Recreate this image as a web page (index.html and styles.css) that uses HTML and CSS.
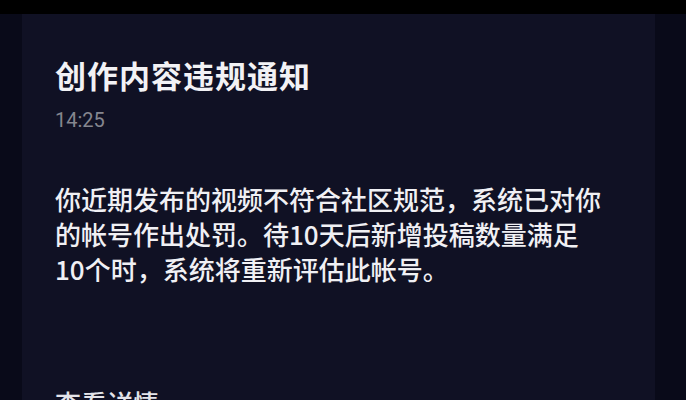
FILE: index.html
```html
<!DOCTYPE html>
<html lang="zh">
<head>
<meta charset="utf-8">
<link rel="stylesheet" href="styles.css">
</head>
<body>
<div class="topbar"></div>
<div class="page">
  <div class="card">
    <h1 class="title">创作内容违规通知</h1>
    <div class="time">14:25</div>
    <p class="body">你近期发布的视频不符合社区规范，系统已对你<br>的帐号作出处罚。待10天后新增投稿数量满足<br>10个时，系统将重新评估此帐号。</p>
    <div class="divider"></div>
    <div class="footer">
      <span class="more">查看详情</span>
      <span class="arrow">›</span>
    </div>
  </div>
</div>
</body>
</html>
```

FILE: styles.css
```css
html, body {
  margin: 0;
  padding: 0;
  height: 100%;
  overflow: hidden;
  background: #090a19;
  font-family: "Noto Sans CJK SC", "Noto Sans", sans-serif;
}
.topbar {
  height: 14px;
  background: #000;
}
.page {
  display: flex;
  padding: 0 31px 0 22px;
  height: 386px;
}
.card {
  flex: 1;
  background: #101124;
  padding: 40px 30px 0 33px;
  display: flex;
  flex-direction: column;
}
.title {
  margin: 0;
  font-size: 31px;
  font-weight: 700;
  line-height: 42px;
  letter-spacing: 1px;
  color: #f2f2f5;
}
.time {
  margin-top: 12px;
  font-family: "Roboto", "Noto Sans", sans-serif;
  font-size: 20px;
  line-height: 24px;
  color: #85868f;
}
.body {
  margin: 49px 0 0 0;
  white-space: nowrap;
  font-size: 26px;
  font-weight: 500;
  line-height: 35px;
  color: #f0f0f4;
}
.divider {
  margin-top: 76px;
  margin-left: 5px;
  height: 1px;
  background: #1b1c30;
}
.footer {
  display: flex;
  justify-content: space-between;
  align-items: flex-start;
  margin-top: 24px;
  color: #e4e4ea;
  font-size: 26px;
  font-weight: 500;
  line-height: 34px;
}
.arrow {
  color: #8a8b96;
  margin-right: 10px;
}
```
